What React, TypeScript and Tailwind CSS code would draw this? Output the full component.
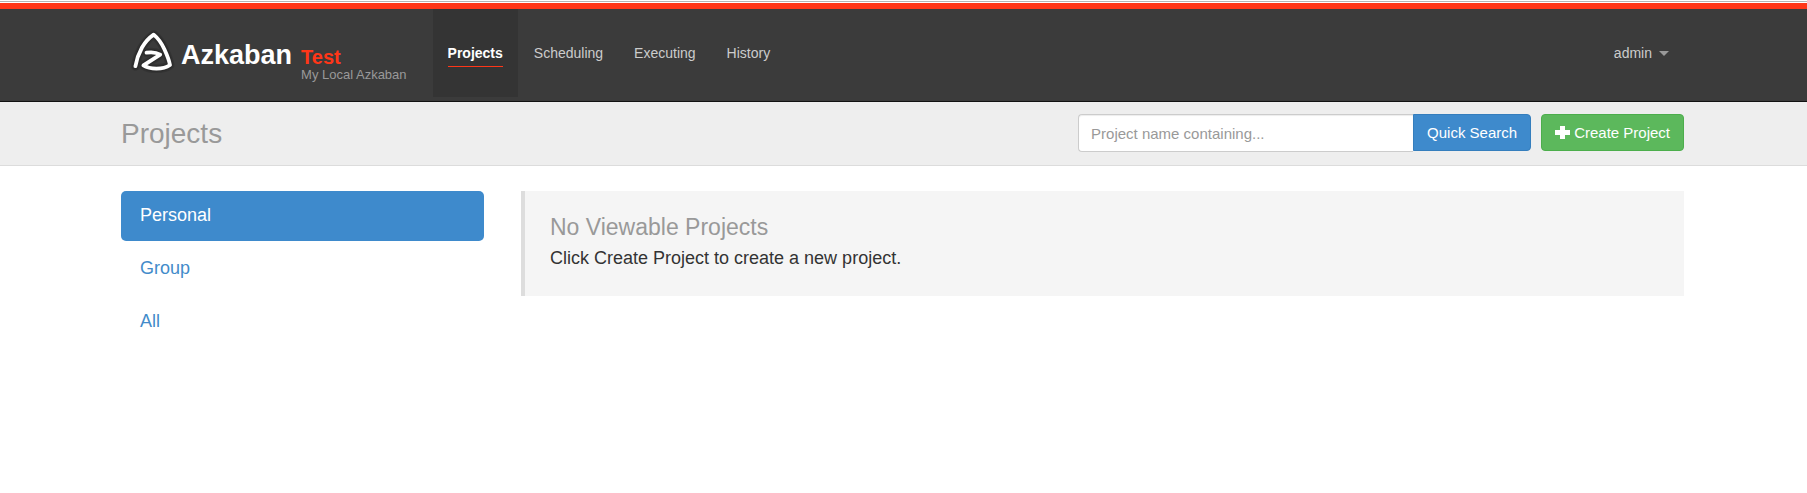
const navItems = ["Scheduling", "Executing", "History"];

const logoPath =
  "M5.4 41.2C6.500 34.500 9 28 12 22.500C15 17.300 19 12.800 23.700 9.600C28.500 13.500 32 19 34.500 24.500C37 30 39 34.500 40 40C33 44.800 20 44.600 13.400 40.400L30.200 29.600C26.500 27.400 21.500 26.900 16.500 27.700";

function Logo() {
  return (
    <svg className="size-[50px] shrink-0" viewBox="0 0 50 50" fill="none" aria-hidden="true">
      <g strokeLinecap="round" strokeLinejoin="round">
        <path d={logoPath} stroke="#222222" strokeOpacity="0.3" strokeWidth="9" />
        <path d={logoPath} stroke="#222222" strokeOpacity="0.4" strokeWidth="6.5" />
        <path d={logoPath} stroke="#ffffff" strokeWidth="3.8" />
      </g>
    </svg>
  );
}

export default function App() {
  return (
    <div className="min-h-screen bg-white font-['Liberation_Sans',Arial,sans-serif] text-[#333333]">
      <div className="h-[3px] border-b border-white bg-white pt-px">
        <div className="h-px bg-[#b4b4b4]" />
      </div>
      <header className="border-t-6 border-b border-t-[#ff3618] border-b-[#121212] bg-[#3b3b3b]">
        <div className="mx-auto flex h-[92px] max-w-[1565px] items-start pr-0.5">
          <a href="#" className="flex items-start pt-4 pl-[9px]">
            <Logo />
            <span className="flex items-baseline gap-[9px] pt-[14px] pl-px">
              <span className="text-[27px] leading-8 font-bold text-white">Azkaban</span>
              <span className="flex flex-col">
                <span className="text-[20px] leading-5 font-bold text-[#ff3618]">Test</span>
                <span className="text-[13px] leading-4 text-[#999999]">My Local Azkaban</span>
              </span>
            </span>
          </a>
          <nav className="ml-[26px] flex gap-px text-[14px] leading-5">
            <a href="#" className="h-[88px] bg-[#343434] px-[15px] pt-[34px] font-bold text-white">
              <span className="block border-b border-[#ff3618] pb-[3px]">Projects</span>
            </a>
            {navItems.map((item) => (
              <a key={item} href="#" className="px-[15px] pt-[34px] text-[#cccccc]">
                {item}
              </a>
            ))}
          </nav>
          <button
            type="button"
            className="ml-auto flex items-center gap-[7px] px-[15px] pt-[34px] text-[14px] leading-5 text-[#cccccc]"
          >
            admin
            <svg className="h-[5px] w-[10px]" viewBox="0 0 10 5" aria-hidden="true">
              <path d="M0 0h10L5 5z" fill="#999999" />
            </svg>
          </button>
        </div>
      </header>

      <div className="border-b border-[#dcdcdc] bg-[#eeeeee]">
        <div className="mx-auto flex max-w-[1565px] items-start justify-between pt-3 pr-0.5 pb-[13px]">
          <h1 className="pt-0.5 text-[28px] leading-9 text-[#999999]">Projects</h1>
          <div className="flex items-start gap-[10px] text-[15px] leading-[21px]">
            <form className="flex items-start" onSubmit={(e) => e.preventDefault()}>
              <input
                type="text"
                aria-label="Project name"
                placeholder="Project name containing..."
                className="h-[38px] w-[335px] rounded-l-[4px] border border-r-0 border-[#cccccc] bg-white px-3 shadow-[inset_0_1px_1px_rgba(0,0,0,0.075)] outline-none placeholder:text-[#999999]"
              />
              <button
                type="submit"
                className="h-[37px] rounded-r-[4px] border border-[#357ebd] bg-[#3e8acc] px-[13px] text-white"
              >
                Quick Search
              </button>
            </form>
            <button
              type="button"
              className="flex h-[37px] items-center gap-1 rounded-[4px] border border-[#4cae4c] bg-[#5cb85c] px-[13px] text-white"
            >
              <svg className="size-[15px]" viewBox="0 0 15 15" aria-hidden="true">
                <path d="M5 1h5v4h5v5h-5v4h-5v-4h-5v-5h5z" fill="#ffffff" />
              </svg>
              Create Project
            </button>
          </div>
        </div>
      </div>

      <main className="mx-auto grid max-w-[1565px] grid-cols-4 items-start gap-[37px] pt-[25px] pr-0.5">
        <nav className="flex flex-col gap-[3px] text-[18px] leading-[25px] text-[#428bca]">
          <a href="#" className="rounded-[5px] bg-[#3e8acc] px-[19px] pt-3 pb-[13px] text-white">
            Personal
          </a>
          <a href="#" className="px-[19px] pt-3 pb-[13px]">
            Group
          </a>
          <a href="#" className="px-[19px] pt-3 pb-[13px]">
            All
          </a>
        </nav>
        <section className="col-span-3 border-l-4 border-[#dddddd] bg-[#f5f5f5] px-[25px] pt-6 pb-[25px]">
          <h2 className="text-[23px] leading-[25px] text-[#999999]">No Viewable Projects</h2>
          <p className="pt-[6px] text-[18px] leading-[25px]">
            Click Create Project to create a new project.
          </p>
        </section>
      </main>
    </div>
  );
}
